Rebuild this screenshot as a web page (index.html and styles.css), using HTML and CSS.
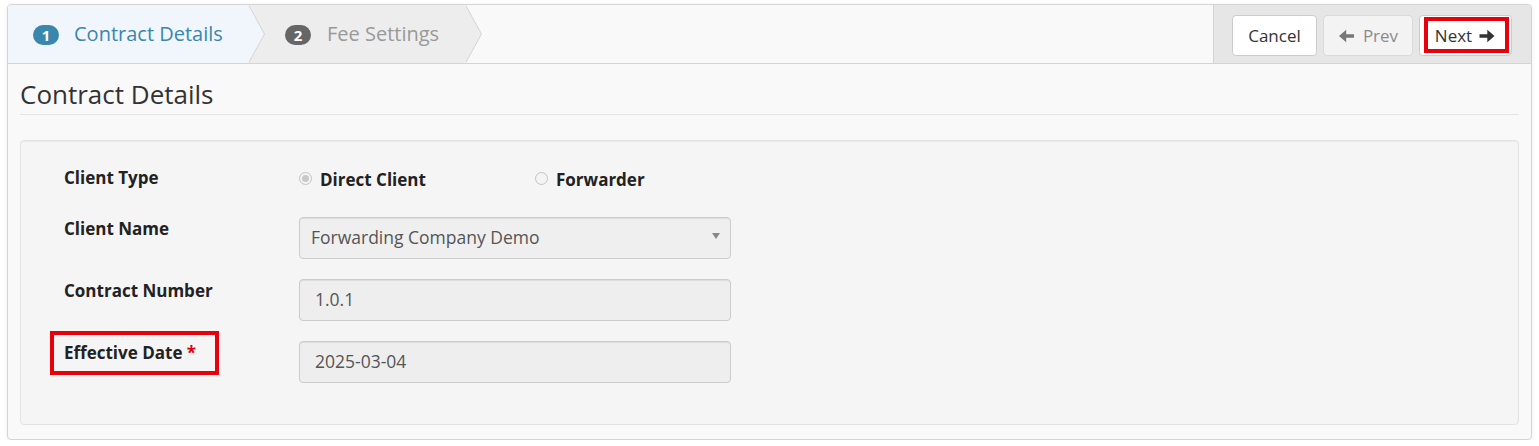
FILE: index.html
```html
<!DOCTYPE html>
<html lang="en">
<head>
<meta charset="utf-8">
<title>Contract Wizard</title>
<link rel="stylesheet" href="styles.css">
</head>
<body>
<div class="page">
  <div class="wizard">
    <div class="wizard-head">
      <ul class="steps">
        <li class="step active"><span class="badge">1</span><span class="step-label">Contract Details</span><span class="chevron"></span></li>
        <li class="step second"><span class="badge">2</span><span class="step-label">Fee Settings</span><span class="chevron"></span></li>
      </ul>
      <div class="actions">
        <button class="btn btn-cancel">Cancel</button>
        <button class="btn btn-prev" disabled><svg class="arrow" width="16" height="14" viewBox="0 0 16 14"><path d="M16 5.2H8.2V0.8L1 7l7.2 6.2V8.8H16z"/></svg><span>Prev</span></button>
        <button class="btn btn-next"><span>Next</span><svg class="arrow" width="17" height="14" viewBox="0 0 16 14"><path d="M0 5.2h7.8V0.8L15 7l-7.2 6.2V8.8H0z"/></svg><span class="mark mark-next"></span></button>
      </div>
    </div>
    <div class="wizard-body">
      <h3 class="section-title">Contract Details</h3>
      <div class="well">
        <div class="row row-radio">
          <div class="label">Client Type</div>
          <div class="radios">
            <label class="radio"><span class="radio-dot checked"></span>Direct Client</label>
            <label class="radio"><span class="radio-dot"></span>Forwarder</label>
          </div>
        </div>
        <div class="row">
          <div class="label">Client Name</div>
          <div class="field select">Forwarding Company Demo<span class="caret"></span></div>
        </div>
        <div class="row">
          <div class="label">Contract Number</div>
          <div class="field input">1.0.1</div>
        </div>
        <div class="row">
          <div class="label marked">Effective Date <span class="req">*</span><span class="mark mark-label"></span></div>
          <div class="field input">2025-03-04</div>
        </div>
      </div>
    </div>
  </div>
</div>
</body>
</html>
```
FILE: styles.css
```css
* { box-sizing: border-box; }
html, body { margin: 0; padding: 0; background: #ffffff; }
body { font-family: "Open Sans", "Liberation Sans", sans-serif; font-size: 17px; color: #333; }

.page { padding: 4px 7px 0 7px; }

.wizard {
  border: 1px solid #d4d4d4;
  border-radius: 4px;
  background: #f9f9f9;
  box-shadow: 0 1px 4px rgba(0,0,0,0.065);
  height: 436px;
  overflow: hidden;
}

.wizard-head {
  display: flex;
  height: 59px;
  border-bottom: 1px solid #d4d4d4;
}

.steps {
  list-style: none;
  margin: 0;
  padding: 0;
  display: flex;
  flex: 1;
}

.step {
  position: relative;
  height: 58px;
  line-height: 58px;
  font-size: 20px;
  background: #ededed;
  color: #999999;
  padding: 0 26px 0 37px;
  white-space: nowrap;
}
.step.active {
  background: #f1f6fc;
  color: #3a87ad;
  padding-left: 25px;
  width: 240px;
}
.step.second { width: 217px; }

.badge {
  display: inline-block;
  width: 26px;
  padding: 1px 0 1px;
  line-height: 18px;
  font-size: 15px;
  font-weight: 700;
  color: #fff;
  text-align: center;
  border-radius: 10px;
  background: #666666;
  margin-right: 16px;
}
.step.active .badge { background: #3a87ad; margin-right: 15px; }

.chevron {
  position: absolute;
  top: 0;
  right: -16px;
  width: 16px;
  height: 58px;
  z-index: 2;
}
.chevron::before, .chevron::after {
  content: "";
  position: absolute;
  top: 0;
  width: 0;
  height: 0;
  border-top: 29px solid transparent;
  border-bottom: 29px solid transparent;
  border-left: 16px solid #d4d4d4;
}
.chevron::before { left: 1px; }
.chevron::after { left: 0; border-left-color: #ededed; }
.step.active .chevron::after { border-left-color: #f1f6fc; }

.actions {
  display: flex;
  align-items: flex-start;
  gap: 6px;
  padding: 10px 19px 0 18px;
  background: #e6e6e6;
  border-left: 1px solid #d4d4d4;
}

.btn {
  position: relative;
  display: inline-flex;
  align-items: center;
  justify-content: center;
  height: 41px;
  padding: 0;
  font-family: "Open Sans", "Liberation Sans", sans-serif;
  font-size: 17px;
  color: #333;
  background: #ffffff;
  border: 1px solid #cccccc;
  border-radius: 4px;
  cursor: pointer;
}
.btn-cancel { width: 85px; }
.btn .arrow { fill: #333; display: block; }
.btn-prev {
  width: 90px;
  background: #f3f3f3;
  border-color: #dadada;
  color: #8c8c8c;
  gap: 9px;
  cursor: default;
}
.btn-prev .arrow { fill: #777; }
.btn-next { width: 93px; gap: 7px; }

.mark {
  position: absolute;
  border: 4px solid #e8000b;
  pointer-events: none;
}
.mark-next { left: 4px; top: 1px; width: 85px; height: 36px; }

.wizard-body { padding: 0 12px 0 12px; }

.section-title {
  margin: 15px 0 25px;
  font-size: 26px;
  font-weight: 400;
  line-height: 30px;
  padding-bottom: 5px;
  color: #333;
  border-bottom: 1px solid #e5e5e5;
}

.well {
  background: #f5f5f5;
  border: 1px solid #e3e3e3;
  border-radius: 4px;
  box-shadow: inset 0 1px 1px rgba(0,0,0,0.05);
  padding: 25px 43px 41px 43px;
}

.row {
  display: flex;
  align-items: flex-start;
  margin-bottom: 20px;
}
.row:last-child { margin-bottom: 0; }
.row-radio { margin-bottom: 25px; }

.label {
  position: relative;
  width: 235px;
  flex: none;
  font-weight: 700;
  line-height: 24px;
  color: #222;
}
.req { color: #e8000b; }
.mark-label { left: -14px; top: -10px; width: 169px; height: 44px; }

.radios { display: flex; padding-top: 2px; }
.radio {
  display: flex;
  align-items: center;
  width: 236px;
  font-weight: 700;
  line-height: 24px;
  color: #222;
}
.radio-dot {
  width: 13px;
  height: 13px;
  border-radius: 50%;
  border: 1px solid #c4c4c4;
  background: #f4f4f4;
  margin-right: 8px;
  position: relative;
  top: -2px;
}
.radio-dot.checked::after {
  content: "";
  position: absolute;
  left: 2px;
  top: 2px;
  width: 7px;
  height: 7px;
  border-radius: 50%;
  background: #c9c9c9;
}

.field {
  position: relative;
  width: 432px;
  height: 42px;
  line-height: 38px;
  font-size: 17.5px;
  border: 1px solid #cccccc;
  border-radius: 4px;
  background: #eeeeee;
  color: #555;
  box-shadow: inset 0 1px 1px rgba(0,0,0,0.075);
  padding-left: 15px;
}
.select { padding-left: 11px; background: #efefef; }
.caret {
  position: absolute;
  right: 10px;
  top: 15px;
  width: 0;
  height: 0;
  border-left: 4px solid transparent;
  border-right: 4px solid transparent;
  border-top: 6px solid #888;
}
```
